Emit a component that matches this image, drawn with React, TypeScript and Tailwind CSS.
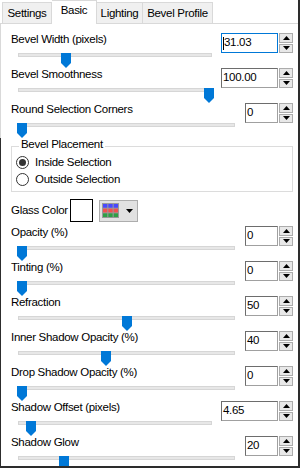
import React from "react";

type Row = {
  label: string;
  value: string;
  thumb: number;
  wide?: boolean;
  focused?: boolean;
};

const topRows: Row[] = [
  { label: "Bevel Width (pixels)", value: "31.03", thumb: 43, wide: true, focused: true },
  { label: "Bevel Smoothness", value: "100.00", thumb: 186, wide: true },
  { label: "Round Selection Corners", value: "0", thumb: -1 },
];

const bottomRows: Row[] = [
  { label: "Opacity (%)", value: "0", thumb: -1 },
  { label: "Tinting (%)", value: "0", thumb: -1 },
  { label: "Refraction", value: "50", thumb: 104 },
  { label: "Inner Shadow Opacity (%)", value: "40", thumb: 83 },
  { label: "Drop Shadow Opacity (%)", value: "0", thumb: -1 },
  { label: "Shadow Offset (pixels)", value: "4.65", thumb: 8, wide: true },
  { label: "Shadow Glow", value: "20", thumb: 41 },
];

const tabs = [
  { name: "Settings", w: "w-[50px]" },
  { name: "Basic", w: "w-[45px]", active: true },
  { name: "Lighting", w: "w-[46px]" },
  { name: "Bevel Profile", w: "w-[70px]" },
];

function Arrow({ up }: { up?: boolean }) {
  return (
    <svg width="7" height="4" viewBox="0 0 7 4">
      <path d={up ? "M3.5 0L7 4H0Z" : "M0 0H7L3.5 4Z"} fill="#000" />
    </svg>
  );
}

function Spinner() {
  return (
    <div className="ml-[1px] flex w-[14px] flex-col gap-[1px]">
      <div className="flex flex-1 items-center justify-center border border-[#acacac] bg-[#e8e8e8]">
        <Arrow up />
      </div>
      <div className="flex flex-1 items-center justify-center border border-[#acacac] bg-[#e8e8e8]">
        <Arrow />
      </div>
    </div>
  );
}

function NumBox({ row }: { row: Row }) {
  return (
    <div className={`flex h-[20px] ${row.wide ? "ml-[9px]" : "ml-[10px]"}`}>
      <div
        className={`flex items-center border bg-white pl-[1px] ${row.wide ? "w-[57px]" : "w-[33px]"} ${
          row.focused ? "border-[#0078d7]" : "border-[#a0a0a0] border-t-[#6d6d6d] border-l-[#6d6d6d]"
        }`}
      >
        {row.focused && <span className="h-[13px] w-[1px] bg-black" />}
        <span className="leading-none">{row.value}</span>
      </div>
      <Spinner />
    </div>
  );
}

function SliderRow({ row }: { row: Row }) {
  return (
    <div className="flex h-[35px] shrink-0 pl-[11px]">
      <div className={row.wide ? "w-[201px]" : "w-[224px]"}>
        <div className="h-[15px] whitespace-nowrap leading-[12px]">{row.label}</div>
        <div className="relative ml-[7px] h-[16px]">
          <div className="mt-[5px] h-[4px] border border-[#d6d6d6] bg-[#e7e7e7]" />
          <svg
            className="absolute top-0"
            style={{ left: row.thumb }}
            width="10"
            height="15"
            viewBox="0 0 10 15"
          >
            <path d="M0 0H10V10L5 15L0 10Z" fill="#0078d7" />
          </svg>
        </div>
      </div>
      <NumBox row={row} />
    </div>
  );
}

function Radio({ label, checked }: { label: string; checked?: boolean }) {
  return (
    <div className="flex h-[17px] items-center pl-[4px]">
      <div className="flex h-[13px] w-[13px] items-center justify-center rounded-full border border-[#333] bg-white">
        {checked && <div className="h-[7px] w-[7px] rounded-full bg-[#333]" />}
      </div>
      <span className="ml-[6px] leading-none">{label}</span>
    </div>
  );
}

function ColorGrid() {
  const rows = ["#4848ff", "#f25050", "#2fa046"];
  return (
    <svg width="17" height="15" viewBox="0 0 17 15">
      <rect x="0" y="0" width="17" height="15" fill="#9a9a9a" />
      {rows.map((c, r) =>
        [0, 1, 2].map((col) => (
          <rect key={`${r}-${col}`} x={1 + col * 5.34} y={1 + r * 4.67} width="4.3" height="3.7" fill={c} />
        ))
      )}
    </svg>
  );
}

export default function App() {
  return (
    <div className="h-[469px] w-[301px] bg-white pb-[1px] pr-[1px] font-['Liberation_Sans',Arial,sans-serif] text-[11.5px] tracking-[-0.3px] text-black">
      <div className="flex h-full flex-col overflow-hidden border-b-2 border-r-2 border-[#2d2d2d]">
        {/* tab strip */}
        <div className="flex h-[23px] shrink-0 items-end pl-[2px]">
          {tabs.map((t, i) =>
            t.active ? (
              <div
                key={t.name}
                className={`relative z-10 -mb-[1px] flex h-[24px] items-center justify-center border-r border-t border-[#d9d9d9] bg-white pb-[3px] ${t.w}`}
              >
                {t.name}
              </div>
            ) : (
              <div
                key={t.name}
                className={`flex h-[21px] items-center justify-center border-r border-t border-[#d9d9d9] bg-[#f0f0f0] pt-[1px] ${t.w} ${
                  i === 0 ? "border-l" : ""
                }`}
              >
                {t.name}
              </div>
            )
          )}
        </div>

        <div className="flex min-h-0 flex-1 flex-col border-t border-[#d9d9d9] pt-[9px] shadow-[inset_1px_0_0_#d9d9d9]">
          {topRows.map((r) => (
            <SliderRow key={r.label} row={r} />
          ))}

          <div className="flex flex-col shadow-[inset_1px_0_0_#2d2d2d]">
            {/* group box */}
            <fieldset className="mx-[11px] w-[282px] border border-[#dcdcdc] pb-[3px]">
              <legend className="ml-[7px] h-[16px] px-[2px] leading-[12px]">Bevel Placement</legend>
              <Radio label="Inside Selection" checked />
              <Radio label="Outside Selection" />
            </fieldset>

            {/* glass color */}
            <div className="flex h-[34px] shrink-0 items-start pl-[11px] pt-[7px]">
              <div className="flex h-[23px] items-center">
                <span className="w-[59px] whitespace-nowrap">Glass Color</span>
                <div className="h-[23px] w-[23px] border border-black bg-white" />
                <div className="ml-[6px] flex h-[22px] w-[39px] items-center border border-[#adadad] bg-[#e1e1e1] pl-[2px]">
                  <ColorGrid />
                  <div className="ml-[7px]">
                    <Arrow />
                  </div>
                </div>
              </div>
            </div>

            {bottomRows.map((r) => (
              <SliderRow key={r.label} row={r} />
            ))}
          </div>
        </div>
      </div>
    </div>
  );
}
